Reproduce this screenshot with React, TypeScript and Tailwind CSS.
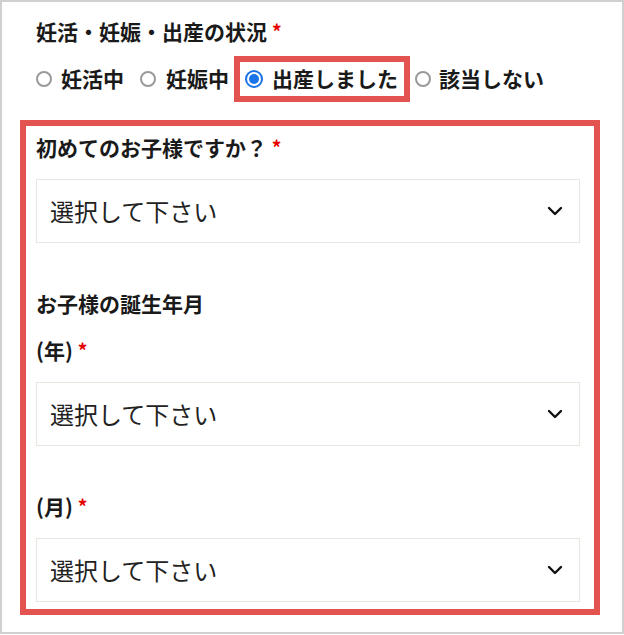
const jp = { fontFamily: '"Noto Sans CJK JP", "Noto Sans", sans-serif' };

const Radio = ({ checked = false }: { checked?: boolean }) =>
	checked ? (
		<span className="w-[18px] h-[18px] rounded-full border-2 border-[#1a73e8] flex items-center justify-center shrink-0">
			<span className="w-[10px] h-[10px] rounded-full bg-[#1a73e8]" />
		</span>
	) : (
		<span className="w-[16px] h-[16px] rounded-full border-2 border-[#9a9a9a] flex shrink-0" />
	);

const Req = () => <span className="text-[#e60000] text-[19px] font-bold align-top">*</span>;

const SelectBox = () => (
	<div className="h-[64px] border border-[#e7e7e0] bg-white flex items-center justify-between pl-[13px] pr-[16px]">
		<span className="text-[24px] text-[#222] leading-none">選択して下さい</span>
		<svg width="16" height="10" viewBox="0 0 16 10" fill="none">
			<polyline points="2,2 8,8 14,2" stroke="#111" strokeWidth="2.4" strokeLinecap="round" strokeLinejoin="round" />
		</svg>
	</div>
);

export default function App() {
	return (
		<div className="w-[624px] h-[634px] border-2 border-[#d0d0d0] bg-white text-[#1a1a1a]" style={jp}>
			{/* 状況 */}
			<div className="ml-[34px] mt-[15px] h-[28px] leading-[28px] text-[21px] font-bold">
				妊活・妊娠・出産の状況<span className="ml-[5px]"><Req /></span>
			</div>

			<div className="ml-[34px] mt-[11px] h-[46px] flex items-center text-[21px] font-bold">
				<Radio />
				<span className="ml-[9px]">妊活中</span>
				<span className="ml-[16px] flex"><Radio /></span>
				<span className="ml-[10px]">妊娠中</span>
				<div className="ml-[5px] h-[46px] border-[6px] border-[#e35451] flex items-center pl-[5px] pr-[6px]">
					<Radio checked />
					<span className="ml-[9px]">出産しました</span>
				</div>
				<span className="ml-[5px] flex"><Radio /></span>
				<span className="ml-[8px]">該当しない</span>
			</div>

			{/* 子供情報 */}
			<div className="ml-[18px] mt-[18px] w-[580px] border-[6px] border-[#e35451] pl-[10px] pr-[14px] pt-[7px] pb-[7px]">
				<div className="h-[28px] leading-[28px] text-[21px] font-bold">
					初めてのお子様ですか？ <Req />
				</div>
				<div className="mt-[18px]">
					<SelectBox />
				</div>

				<div className="mt-[46px] h-[28px] leading-[28px] text-[21px] font-bold">
					お子様の誕生年月
				</div>
				<div className="mt-[19px] h-[28px] leading-[28px] text-[21px] font-bold">
					(年) <Req />
				</div>
				<div className="mt-[18px]">
					<SelectBox />
				</div>

				<div className="mt-[46px] h-[28px] leading-[28px] text-[21px] font-bold">
					(月) <Req />
				</div>
				<div className="mt-[18px]">
					<SelectBox />
				</div>
			</div>
		</div>
	);
}
